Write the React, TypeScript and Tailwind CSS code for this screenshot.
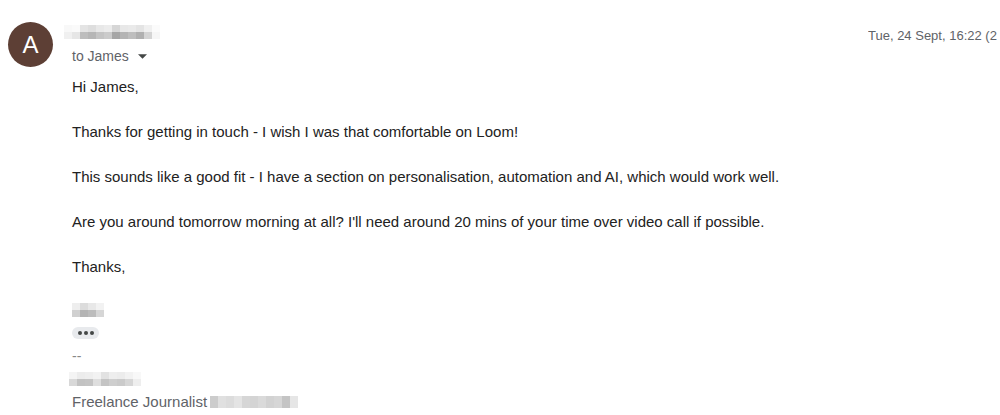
// pixelated "redacted" blocks, one class per cell
function Pixels({ rows, cell = "w-[8px] h-[7px]" }: { rows: string[][]; cell?: string }) {
  return (
    <div className="flex flex-col">
      {rows.map((row, i) => (
        <div key={i} className="flex">
          {row.map((c, j) => (
            <div key={j} className={`${cell} ${c}`} />
          ))}
        </div>
      ))}
    </div>
  );
}

const nameRows = [
  ["bg-[#f8f8f8]", "bg-[#fafafa]", "bg-[#e4e4e4]", "bg-[#dedede]", "bg-[#e8e8e8]", "bg-[#ececec]", "bg-[#d6d6d6]", "bg-[#e8e8e8]", "bg-[#eaeaea]", "bg-[#e4e4e4]", "bg-[#f0f0f0]", "bg-[#fbfbfb]"],
  ["bg-[#f0f0f0]", "bg-[#e6e6e6]", "bg-[#bdbdbd]", "bg-[#b6b6b6]", "bg-[#c4c4c4]", "bg-[#cbcbcb]", "bg-[#a6a6a6]", "bg-[#b4b4b4]", "bg-[#bebebe]", "bg-[#b0b0b0]", "bg-[#d4d4d4]", "bg-[#f6f6f6]"],
];

const sigNameRows = [
  ["bg-[#eeeeee]", "bg-[#dcdcdc]", "bg-[#e8e8e8]", "bg-[#f2f2f2]"],
  ["bg-[#d0d0d0]", "bg-[#b4b4b4]", "bg-[#bcbcbc]", "bg-[#d6d6d6]"],
];

const sigLineRows = [
  ["bg-[#f4f4f4]", "bg-[#ececec]", "bg-[#eeeeee]", "bg-[#f2f2f2]", "bg-[#e2e2e2]", "bg-[#eeeeee]", "bg-[#ececec]", "bg-[#f2f2f2]", "bg-[#f8f8f8]"],
  ["bg-[#d8d8d8]", "bg-[#c2c2c2]", "bg-[#c4c4c4]", "bg-[#dedede]", "bg-[#c4c4c4]", "bg-[#cecece]", "bg-[#cacaca]", "bg-[#d6d6d6]", "bg-[#eeeeee]"],
];

const companyRows = [
  ["bg-[#cccccc]", "bg-[#e0e0e0]", "bg-[#dcdcdc]", "bg-[#e4e4e4]", "bg-[#d6d6d6]", "bg-[#d4d4d4]", "bg-[#dadada]", "bg-[#d2d2d2]", "bg-[#d6d6d6]", "bg-[#c4c4c4]", "bg-[#e6e6e6]"],
];

export default function App() {
  return (
    <div className="w-[1000px] h-[415px] overflow-hidden bg-white font-['Liberation_Sans',Arial,sans-serif] flex">
      {/* Avatar */}
      <div className="pl-[8px] pt-[22px]">
        <div className="w-[45px] h-[45px] rounded-full bg-[#5d3f35] text-white text-[24px] flex items-center justify-center">
          A
        </div>
      </div>

      <div className="flex-1 pl-[19px] min-w-0">
        {/* Header */}
        <div className="flex justify-between">
          <div className="pt-[25px] -ml-[8px]">
            <Pixels rows={nameRows} />
            <div className="mt-[9px] ml-[8px] flex items-center text-[14px] text-[#5f6368] leading-[17px]">
              to James
              <svg className="ml-[9px] w-[9px] h-[5px]" viewBox="0 0 10 5">
                <path d="M0 0 L10 0 L5 5 Z" fill="#444746" />
              </svg>
            </div>
          </div>
          <div className="w-[132px] overflow-hidden pt-[26px] text-[13px] text-[#5f6368] whitespace-nowrap">
            Tue, 24 Sept, 16:22 (2 days ago)
          </div>
        </div>

        {/* Body */}
        <div className="mt-[11px] text-[15px] leading-[22.5px] text-[#222222]">
          <div>Hi James,</div>
          <br />
          <div>Thanks for getting in touch - I wish I was that comfortable on Loom!</div>
          <br />
          <div>This sounds like a good fit - I have a section on personalisation, automation and AI, which would work well.</div>
          <br />
          <div>Are you around tomorrow morning at all? I'll need around 20 mins of your time over video call if possible.</div>
          <br />
          <div>Thanks,</div>
        </div>

        {/* Signature */}
        <div className="mt-[24px]">
          <Pixels rows={sigNameRows} />
          <div className="mt-[10px] w-[27px] h-[12px] rounded-full bg-[#e8eaed] flex items-center justify-center gap-[2px]">
            <span className="w-[4px] h-[4px] rounded-full bg-[#444746]" />
            <span className="w-[4px] h-[4px] rounded-full bg-[#444746]" />
            <span className="w-[4px] h-[4px] rounded-full bg-[#444746]" />
          </div>
          <div className="mt-[7px] text-[14px] leading-[20px] text-[#888888]">--</div>
          <div className="mt-[6px] -ml-[3px]">
            <Pixels rows={sigLineRows} />
          </div>
          <div className="mt-[6px] flex items-center text-[15px] text-[#5f6368] leading-[20px]">
            Freelance Journalist
            <div className="ml-[3px]">
              <Pixels rows={companyRows} cell="w-[8px] h-[12px]" />
            </div>
          </div>
        </div>
      </div>
    </div>
  );
}
